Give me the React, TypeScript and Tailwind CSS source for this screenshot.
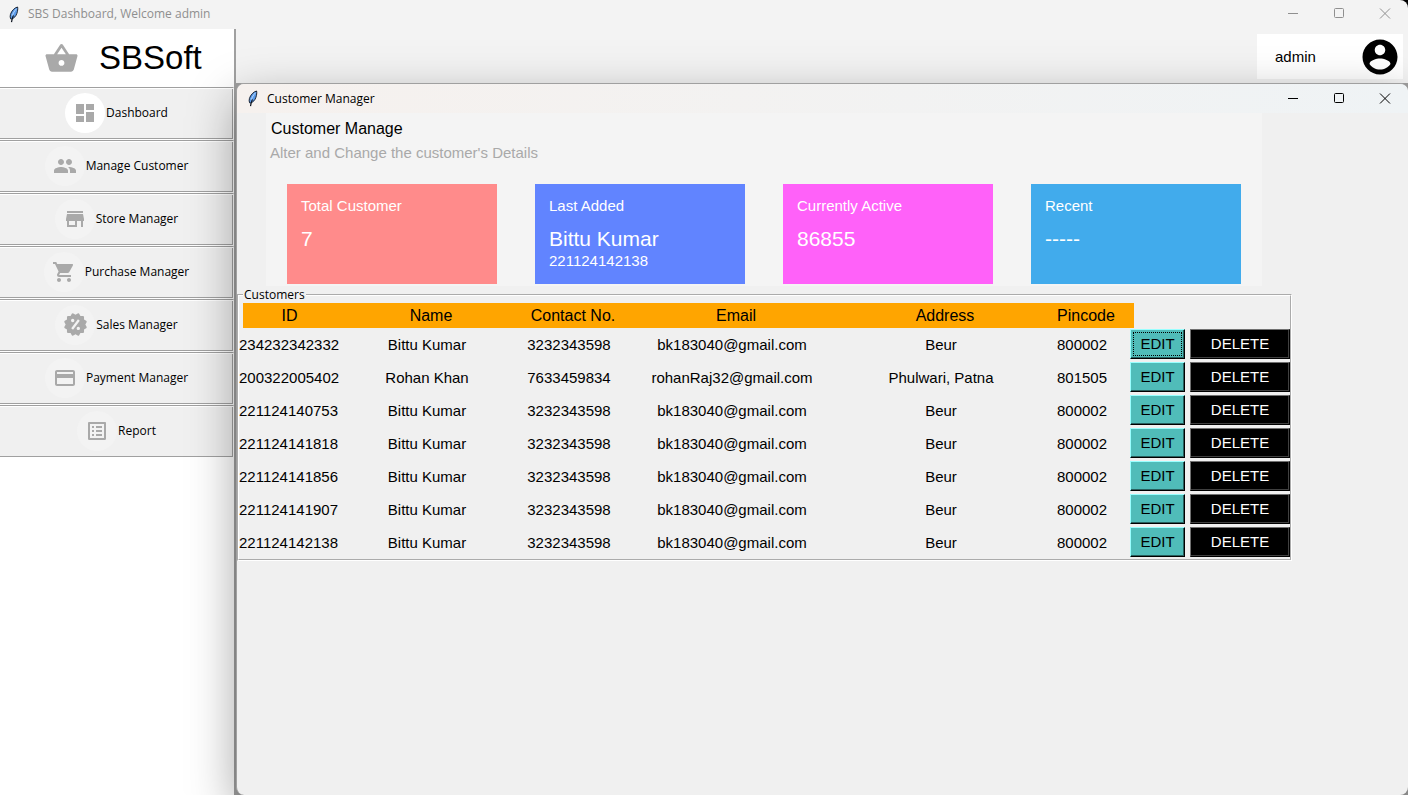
import React from "react";
import {
  MdDashboard,
  MdListAlt,
  MdPayment,
  MdPeople,
  MdShoppingBasket,
  MdShoppingCart,
  MdStore,
} from "react-icons/md";
import { BiSolidOffer } from "react-icons/bi";
import type { IconType } from "react-icons";

const navItems: { label: string; Icon: IconType; size: number; active?: boolean }[] = [
  { label: "Dashboard", Icon: MdDashboard, size: 24, active: true },
  { label: "Manage Customer", Icon: MdPeople, size: 24 },
  { label: "Store Manager", Icon: MdStore, size: 24 },
  { label: "Purchase Manager", Icon: MdShoppingCart, size: 24 },
  { label: "Sales Manager", Icon: BiSolidOffer, size: 27 },
  { label: "Payment Manager", Icon: MdPayment, size: 24 },
  { label: "Report", Icon: MdListAlt, size: 24 },
];

const cards = [
  { title: "Total Customer", value: "7", note: "", color: "bg-[#ff8b8b]" },
  { title: "Last Added", value: "Bittu Kumar", note: "221124142138", color: "bg-[#6184ff]" },
  { title: "Currently Active", value: "86855", note: "", color: "bg-[#ff61f9]" },
  { title: "Recent", value: "-----", note: "", color: "bg-[#41abec]" },
];

const columns = ["ID", "Name", "Contact No.", "Email", "Address", "Pincode"];

const customers = [
  ["234232342332", "Bittu Kumar", "3232343598", "bk183040@gmail.com", "Beur", "800002"],
  ["200322005402", "Rohan Khan", "7633459834", "rohanRaj32@gmail.com", "Phulwari, Patna", "801505"],
  ["221124140753", "Bittu Kumar", "3232343598", "bk183040@gmail.com", "Beur", "800002"],
  ["221124141818", "Bittu Kumar", "3232343598", "bk183040@gmail.com", "Beur", "800002"],
  ["221124141856", "Bittu Kumar", "3232343598", "bk183040@gmail.com", "Beur", "800002"],
  ["221124141907", "Bittu Kumar", "3232343598", "bk183040@gmail.com", "Beur", "800002"],
  ["221124142138", "Bittu Kumar", "3232343598", "bk183040@gmail.com", "Beur", "800002"],
];

function Feather() {
  return (
    <svg width="12" height="17" viewBox="0 0 12 17" aria-hidden="true" className="shrink-0">
      <path
        d="M9.6 1C6.6 1.6 3.4 5 2.4 8.6c-.4 1.5-.3 3 .2 4.2l.9.2c2.6-.8 4.6-3 5.4-5.6C9.6 5.2 10 2.8 9.6 1z"
        fill="#5b9bea"
        stroke="#0d1420"
        strokeWidth="0.9"
      />
      <path d="M8.4 2.8C6.8 4.6 5 7.200 4.200 10" stroke="#b9d8fb" strokeWidth="1" fill="none" />
      <path d="M5.400 9.400C4.600 11.400 4 13.400 3.500 16.200" stroke="#0d1420" strokeWidth="1.200" fill="none" />
    </svg>
  );
}

function WindowControls({ color }: { color: string }) {
  const button = "flex h-full w-[46px] items-center justify-center";
  return (
    <div className={`flex h-full ${color}`}>
      <button type="button" aria-label="Minimize" className={button}>
        <svg width="12" height="12" viewBox="0 0 12 12" stroke="currentColor" fill="none">
          <path d="M1 5.5h10" />
        </svg>
      </button>
      <button type="button" aria-label="Maximize" className={button}>
        <svg width="12" height="12" viewBox="0 0 12 12" stroke="currentColor" fill="none">
          <rect x="1.5" y="0.5" width="9" height="9" rx="1" />
        </svg>
      </button>
      <button type="button" aria-label="Close" className={button}>
        <svg width="12" height="12" viewBox="0 0 12 12" stroke="currentColor" fill="none">
          <path d="M1 0.5l10 10M11 0.5L1 10.5" />
        </svg>
      </button>
    </div>
  );
}

function Sidebar() {
  return (
    <aside className="flex w-[236px] shrink-0 flex-col border-r-2 border-[#a0a0a0] bg-white">
      <div className="flex h-[58px] items-center gap-5 pl-[44px]">
        <MdShoppingBasket size={35} className="text-[#a9a9a9]" />
        <span className="text-[33px] leading-9">SBSoft</span>
      </div>
      <nav className="flex flex-col font-['Open_Sans',sans-serif] text-xs">
        {navItems.map(({ label, Icon, size, active }) => (
          <button
            key={label}
            type="button"
            className="flex h-[53px] items-center justify-center gap-px border-t border-r border-b border-t-[#a0a0a0] border-r-white border-b-white bg-[#f0f0f0] pb-[2px] shadow-[inset_0_1px_0_#fff,inset_-1px_-1px_0_#a0a0a0]"
          >
            <span
              className={`flex size-10 items-center justify-center rounded-full ${
                active ? "bg-white" : "bg-[#f3f3f3]"
              }`}
            >
              <Icon size={size} className="text-[#a9a9a9]" />
            </span>
            {label}
          </button>
        ))}
      </nav>
    </aside>
  );
}

function SummaryCard({ title, value, note, color }: (typeof cards)[number]) {
  return (
    <article className={`h-[100px] px-[14px] pt-3 text-white ${color}`}>
      <h2 className="text-[15px] leading-5">{title}</h2>
      <p className="mt-[11px] text-[21px] leading-6">{value}</p>
      <p className="text-[15px] leading-5">{note}</p>
    </article>
  );
}

function CustomerTable() {
  return (
    <fieldset className="mt-px mr-[116px] min-w-0 border-2 border-white pb-[2px] [border-style:groove]">
      <legend className="ml-1 px-px font-['Open_Sans',sans-serif] text-xs leading-4">Customers</legend>
      <table className="block text-[15px] leading-5">
        <thead className="block">
          <tr className="mr-[156px] ml-1 grid h-[25px] grid-cols-[93fr_190fr_94fr_232fr_186fr_96fr] items-center bg-[#ffa500] text-center text-base leading-6">
            {columns.map((name) => (
              <th key={name} scope="col" className="min-w-0 font-normal whitespace-nowrap">
                {name}
              </th>
            ))}
          </tr>
        </thead>
        <tbody className="mt-px flex flex-col gap-[3px]">
          {customers.map(([id, ...rest], index) => (
            <tr
              key={id}
              className="grid h-[30px] grid-cols-[93fr_190fr_94fr_232fr_186fr_96fr_60px_100px] items-center text-center"
            >
              <td className="w-0 pt-[2px] whitespace-nowrap">{id}</td>
              {rest.map((value, i) => (
                <td key={i} className="min-w-0 pt-[2px] whitespace-nowrap">
                  {value}
                </td>
              ))}
              <td className="flex">
                <button
                  type="button"
                  aria-label={`Edit ${id}`}
                  className={`h-[30px] w-[55px] border border-t-[#9ff] border-r-black border-b-black border-l-[#9ff] bg-[#50bcb9] shadow-[inset_-1px_-1px_0_#285f5e] ${
                    index === 0 ? "outline-1 -outline-offset-4 outline-black outline-dotted" : ""
                  }`}
                >
                  EDIT
                </button>
              </td>
              <td className="flex">
                <button
                  type="button"
                  aria-label={`Delete ${id}`}
                  className="h-[30px] w-[100px] border border-t-[#707070] border-r-black border-b-black border-l-[#707070] bg-black text-white shadow-[inset_-1px_-1px_0_#404040]"
                >
                  DELETE
                </button>
              </td>
            </tr>
          ))}
        </tbody>
      </table>
    </fieldset>
  );
}

function CustomerWindow() {
  return (
    <section className="relative flex flex-1 flex-col overflow-hidden rounded-lg border-t border-l border-[#a0a0a0] bg-[#f0f0f0] shadow-[0_16px_48px_rgba(0,0,0,0.36)]">
      <header className="flex h-[29px] items-center justify-between bg-linear-to-r from-[#f6f1ee] to-[#eff3f5] pl-[10px]">
        <div className="flex items-center gap-2 font-['Open_Sans',sans-serif] text-xs">
          <Feather />
          <span>Customer Manager</span>
        </div>
        <WindowControls color="text-black" />
      </header>
      <div className="mr-[146px] ml-[29px] h-[173px] bg-[#f4f4f4]">
        <h1 className="pt-[6px] pl-[5px] text-base leading-5">Customer Manage</h1>
        <p className="mt-1 pl-1 text-[15px] leading-5 text-[#a9a9a9]">
          Alter and Change the customer's Details
        </p>
        <div className="mt-[21px] grid grid-cols-4 gap-[38px] px-[21px]">
          {cards.map((card) => (
            <SummaryCard key={card.title} {...card} />
          ))}
        </div>
      </div>
      <CustomerTable />
    </section>
  );
}

export default function App() {
  return (
    <div className="min-h-screen bg-black font-['Liberation_Sans',Arial,sans-serif] text-black">
      <div className="flex min-h-screen flex-col overflow-hidden rounded-tr-lg bg-[#f3f3f3]">
        <header className="flex h-[29px] items-center justify-between pb-px pl-2">
          <div className="flex items-center gap-2 font-['Open_Sans',sans-serif] text-xs text-[#8f8f8f]">
            <Feather />
            <span>SBS Dashboard, Welcome admin</span>
          </div>
          <WindowControls color="text-[#8f8f8f]" />
        </header>
        <div className="flex flex-1">
          <Sidebar />
          <main className="flex min-w-0 flex-1 flex-col bg-[#a0a0a0]">
            <div className="flex h-[54px] justify-end bg-[#f3f3f3] pt-[5px] pr-[5px]">
              <button
                type="button"
                className="flex h-[45px] w-[146px] items-center justify-between bg-white pr-[2px] pl-[18px] text-[15px]"
              >
                <span className="pt-[2px]">admin</span>
                <svg width="42" height="42" viewBox="0 0 24 24" aria-hidden="true">
                  <path d="M12 2C6.48 2 2 6.48 2 12s4.48 10 10 10 10-4.48 10-10S17.52 2 12 2zm0 3c1.66 0 3 1.34 3 3s-1.34 3-3 3-3-1.34-3-3 1.34-3 3-3zm0 14.2c-2.5 0-4.71-1.28-6-3.22.03-1.99 4-3.08 6-3.08 1.99 0 5.97 1.09 6 3.08-1.29 1.94-3.5 3.22-6 3.22z" />
                </svg>
              </button>
            </div>
            <CustomerWindow />
          </main>
        </div>
      </div>
    </div>
  );
}
